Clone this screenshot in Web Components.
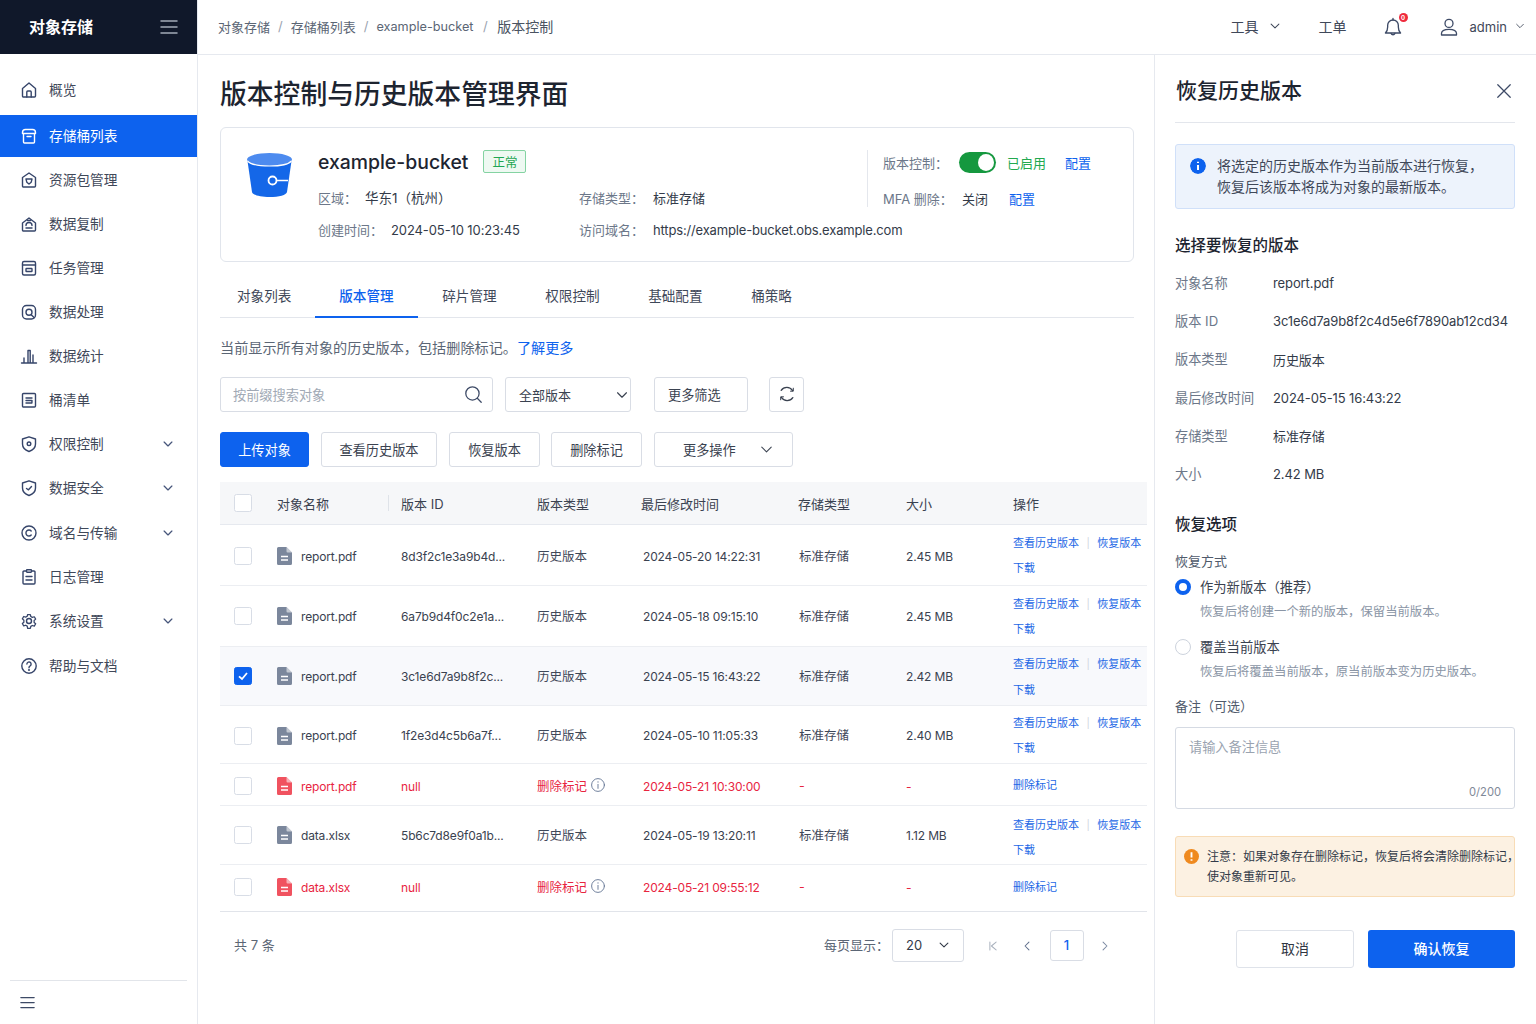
<!DOCTYPE html>
<html lang="zh-CN">
<head>
<meta charset="utf-8">
<title>对象存储</title>
<style>
html,body{margin:0;height:100%;overflow:hidden;background:#fff}
body{font-family:Inter,"Noto Sans CJK SC",sans-serif;font-size:14px;color:#333b49}
</style>
</head>
<body>
<x-app>
  <x-sidebar slot="side">
    <x-nav icon="home">概览</x-nav>
    <x-nav icon="bucket" active>存储桶列表</x-nav>
    <x-nav icon="pack">资源包管理</x-nav>
    <x-nav icon="copy">数据复制</x-nav>
    <x-nav icon="task">任务管理</x-nav>
    <x-nav icon="proc">数据处理</x-nav>
    <x-nav icon="bars">数据统计</x-nav>
    <x-nav icon="list">桶清单</x-nav>
    <x-nav icon="shield" more>权限控制</x-nav>
    <x-nav icon="shieldok" more>数据安全</x-nav>
    <x-nav icon="domain" more style="margin-top:1px">域名与传输</x-nav>
    <x-nav icon="log">日志管理</x-nav>
    <x-nav icon="gear" more>系统设置</x-nav>
    <x-nav icon="help" style="margin-top:1px">帮助与文档</x-nav>
  </x-sidebar>
  <x-topbar slot="top"></x-topbar>
  <x-main slot="main">
    <x-bucket-card></x-bucket-card>
    <x-tabs></x-tabs>
    <x-toolbar></x-toolbar>
    <x-table>
      <x-row h="61" pt="2" lp="0" file="report.pdf" vid="8d3f2c1e3a9b4d..." time="2024-05-20 14:22:31" size="2.45 MB"></x-row>
      <x-row h="61" lp="2" file="report.pdf" vid="6a7b9d4f0c2e1a..." time="2024-05-18 09:15:10" size="2.45 MB"></x-row>
      <x-row h="59" lp="3" file="report.pdf" vid="3c1e6d7a9b8f2c..." time="2024-05-15 16:43:22" size="2.42 MB" checked></x-row>
      <x-row h="58" pt="2" lp="1" file="report.pdf" vid="1f2e3d4c5b6a7f..." time="2024-05-10 11:05:33" size="2.40 MB"></x-row>
      <x-row h="42" pt="3" file="report.pdf" time="2024-05-21 10:30:00" del></x-row>
      <x-row h="59" lp="6" file="data.xlsx" vid="5b6c7d8e9f0a1b..." time="2024-05-19 13:20:11" size="1.12 MB"></x-row>
      <x-row h="47" pb="2" lp="2" file="data.xlsx" time="2024-05-21 09:55:12" del></x-row>
    </x-table>
    <x-pager></x-pager>
  </x-main>
  <x-drawer slot="drawer"></x-drawer>
</x-app>
<script>
const I={
home:'<path d="M2.5 7.5 9 2l6.500 5.500V15a1 1 0 0 1-1 1h-11a1 1 0 0 1-1-1z"/><path d="M6.800 16v-5a1 1 0 0 1 1-1h2.400a1 1 0 0 1 1 1v5"/>',
bucket:'<path d="M2.500 5.500c0-1.700 1-3 3-3h7c2 0 3 1.300 3 3v1h-13z"/><path d="M3.500 6.500V15a1 1 0 0 0 1 1h9a1 1 0 0 0 1-1V6.500"/><path d="M7 9.500h4"/>',
pack:'<path d="M2.500 6.500 9 2l6.500 4.500V15a1 1 0 0 1-1 1h-11a1 1 0 0 1-1-1z"/><path d="M6 8h6l-.8 3.200L9 13l-2.200-1.800z"/>',
copy:'<path d="M2.500 8 9 3l6.500 5v7a1 1 0 0 1-1 1h-11a1 1 0 0 1-1-1z"/><path d="M6 10.500a3 3 0 0 1 6 0M6 13h6"/><path d="M7.500 5.500h3"/>',
task:'<rect x="2.500" y="2.500" width="13" height="13.500" rx="1.500"/><path d="M2.500 6h13"/><rect x="6" y="9.500" width="6" height="3" rx=".5"/>',
proc:'<rect x="2.500" y="2.500" width="13" height="13.500" rx="4"/><circle cx="9" cy="9.200" r="3"/><path d="M11.500 12l2.500 2.500"/>',
bars:'<path d="M1.500 16h15M4 16v-5M8 16V3.500h2.200V16M13 16V8"/>',
list:'<rect x="2.500" y="2.500" width="13" height="13.500" rx="1"/><path d="M6 7h6M6 9.500h6l-.1 2.500H6"/>',
shield:'<path d="M9 1.800 15.500 4v5c0 3.800-2.800 6.200-6.500 7.500C5.300 15.200 2.500 12.800 2.500 9V4z"/><circle cx="9" cy="8.800" r="1.800"/>',
shieldok:'<path d="M9 1.800 15.500 4v5c0 3.800-2.800 6.200-6.500 7.500C5.300 15.200 2.500 12.800 2.500 9V4z"/><path d="M6.500 9.500l2 1.300 3-3.300"/>',
domain:'<circle cx="9" cy="9" r="7"/><path d="M11.200 7a3 3 0 1 0 0 4"/>',
log:'<path d="M6.500 3H4a1 1 0 0 0-1 1v11a1 1 0 0 0 1 1h10a1 1 0 0 0 1-1V4a1 1 0 0 0-1-1h-2.500"/><rect x="6.500" y="1.800" width="5" height="2.500" rx=".7"/><path d="M6 8.500h6M6 12h6"/>',
gear:'<circle cx="9" cy="9" r="2.500"/><path d="M7.500 1.800h3l.5 2.200 1.700 1 2.200-.7 1.500 2.600-1.700 1.500v2.200l1.700 1.500-1.500 2.600-2.200-.7-1.700 1-.5 2.200h-3L7 14.700l-1.700-1-2.200.7-1.500-2.600 1.700-1.500V8.100L1.600 6.600l1.500-2.600 2.200.7 1.700-1z" transform="translate(.9 .9) scale(.9)"/>',
help:'<circle cx="9" cy="9" r="7.200"/><path d="M6.900 7a2.100 2.100 0 1 1 3.300 1.800c-.8.500-1.200 1-1.200 1.900"/><circle cx="9" cy="13" r=".4"/>',
down:'<path d="M4 6.500 9 11.500 14 6.500"/>',
close:'<path d="M2 2l14 14M16 2 2 16"/>',
search:'<circle cx="8" cy="8" r="6.300"/><path d="M12.600 12.600 16.300 16.300"/>',
refresh:'<path d="M14.600 5.600A6.800 6.800 0 0 0 3.200 5.400M3.400 12.400a6.800 6.800 0 0 0 11.400.2"/><path d="M15.300 3.200v3h-2.800" stroke-width="1"/><path d="M2.700 14.800v-3h2.800" stroke-width="1"/>',
bell:'<path d="M2.200 14.400c1.300-1.300 2-2.800 2-5.400V7.500a4.800 4.800 0 0 1 9.600 0V9c0 2.600.7 4.100 2 5.400z"/><path d="M7.300 14.800a1.800 1.800 0 0 0 3.400 0M9 2.700V1.300"/>',
user:'<circle cx="9" cy="5.400" r="4"/><path d="M1.500 17v-1.500c0-3 2.500-4.200 7.500-4.200s7.500 1.200 7.500 4.200V17z"/>',
info:'<circle cx="9" cy="9" r="7.200"/><path d="M9 8.300v4.500M9 5.300v.6"/>',
menu:'<path d="M1 3h16M1 9h16M1 15h16"/>',
first:'<path d="M5 4v10M13 4 7 9l6 5"/>',
prev:'<path d="M11.500 4 6.500 9l5 5"/>',
next:'<path d="M6.500 4l5 5-5 5"/>'
};
const BLUE='#0d62ee';
function def(tag,render){
  customElements.define(tag,class extends HTMLElement{
    connectedCallback(){
      if(this.shadowRoot)return;
      this.attachShadow({mode:'open'}).innerHTML=render(this);
    }
  });
}
def('x-icon',e=>{
  const s=e.getAttribute('size')||18,c=e.getAttribute('color')||'currentColor',w=e.getAttribute('w')||1.4;
  return `<style>:host{display:inline-flex;flex:none;width:${s}px;height:${s}px}svg{display:block}</style>
  <svg width="${s}" height="${s}" viewBox="0 0 18 18" fill="none" stroke="${c}" stroke-width="${w}" stroke-linecap="round" stroke-linejoin="round">${I[e.getAttribute('name')]||''}</svg>`;
});
def('x-app',()=>`<style>
:host{display:grid;grid-template-columns:198px 1fr 382px;grid-template-rows:55px 1fr;height:1024px;overflow:hidden}
.s{grid-row:1/3;display:block}.t{grid-column:2/4;display:block}
</style><slot class="s" name="side"></slot><slot class="t" name="top"></slot><slot name="main"></slot><slot name="drawer"></slot>`);
def('x-sidebar',()=>`<style>
:host{display:flex;flex-direction:column;height:1024px;border-right:1px solid #e6e9ef;box-sizing:border-box;background:#fff}
.logo{height:54px;background:#10182a;display:flex;align-items:center;justify-content:space-between;padding:0 19px 0 29px;color:#fff;font-size:16px;font-weight:700}
.logo span{padding-bottom:2px}
nav{flex:1;padding-top:14px;display:block}
.foot{margin:0 10px;border-top:1px solid #e2e5ea;height:43px;display:flex;align-items:center;padding-left:10px;color:#3d4a66}
</style>
<div class="logo"><span>对象存储</span><x-icon name="menu" size="18" color="#a3abb8" w="1.500"></x-icon></div>
<nav><slot></slot></nav>
<div class="foot"><x-icon name="menu" size="15" w="1.500"></x-icon></div>`);
def('x-nav',e=>{
  const a=e.hasAttribute('active');
  return `<style>
:host{display:flex;align-items:center;box-sizing:border-box;height:${a?42:44}px;${a?'margin:3px 0 1px;':''}padding:0 22px ${a?0:1}px 20px;color:${a?'#fff':'#3f4859'};background:${a?BLUE:'transparent'};font-size:13.700px;line-height:20px}
x-icon{margin-right:11px;color:${a?'#fff':'#36456a'}}
span{flex:1}
</style><x-icon name="${e.getAttribute('icon')}" size="18"></x-icon><span><slot></slot></span>${e.hasAttribute('more')?'<x-icon name="down" size="14" w="1.600" style="margin:0;color:#46557a"></x-icon>':''}`;
});
def('x-topbar',()=>`<style>
:host{display:flex;align-items:center;height:55px;box-sizing:border-box;border-bottom:1px solid #e6e9ef;padding:0 10px 2px 20px;background:#fff;color:#3f4859;font-size:13px}
.bc{flex:1;display:flex;align-items:center;color:#5b6675}
.bc i{font-style:normal;margin:0 8px;color:#9aa3b0}
.bc b{font-weight:400;color:#4a5361;}
.r{display:flex;align-items:center;font-size:14px}
.bell{position:relative;display:inline-flex;margin:2px 37px 0 36px}
.dot{position:absolute;top:-4px;right:-5px;width:9px;height:9px;border-radius:50%;background:#ef2b3d;color:#fff;font-size:6px;line-height:9px;text-align:center;font-weight:700}
</style>
<div class="bc"><span>对象存储</span><i>/</i><span>存储桶列表</span><i>/</i><span style="font-size:12.700px">example-bucket</span><i style="margin:0 9.500px">/</i><b style="font-size:14px">版本控制</b></div>
<div class="r"><span>工具</span><x-icon name="down" size="14" w="1.300" style="margin:0 0 0 9px"></x-icon><span style="margin-left:37px">工单</span>
<span class="bell"><x-icon name="bell" size="20" color="#3d4a66" w="1.200"></x-icon><span class="dot">0</span></span>
<x-icon name="user" size="18" color="#3d4a66" w="1.300" style="margin-top:2px"></x-icon><span style="margin-left:12px;font-size:13px;padding-top:2px">admin</span><x-icon name="down" size="12" w="1.300" style="margin-left:7px"></x-icon></div>`);
def('x-main',()=>`<style>
:host{display:block;box-sizing:border-box;padding:20px 20px 0 22px;min-width:0;height:969px;overflow:hidden;background:#fff}
h1{margin:0 0 14px;font-size:26.800px;line-height:39px;font-weight:500;color:#1d2430;height:38px}
</style><h1>版本控制与历史版本管理界面</h1><slot></slot>`);
def('x-bucket-card',()=>`<style>
:host{display:flex;height:135px;box-sizing:border-box;border:1px solid #e1e5ec;border-radius:6px;padding:22px 0 0 26px;background:#fff;font-size:13px;color:#333b49;white-space:nowrap}
svg{flex:none;display:block;margin:3px 26px 0 0}
.d{flex:1;min-width:0}
.n{display:flex;align-items:center;height:23px}
.name{font-size:19.400px;font-weight:500;color:#1d2430}
.tag{margin-left:15px;height:23px;width:43px;box-sizing:border-box;border:1px solid #84d3a2;border-radius:2px;background:#eef9f2;color:#1fa653;font-size:12.500px;display:flex;align-items:center;justify-content:center}
.g{display:grid;grid-template-columns:261px 1fr;margin-top:9px}
.c{height:32px;display:flex;align-items:center;line-height:20px}
.l{color:#6c7789}
.right{width:266px;flex:none;border-left:1px solid #e4e7ed;height:57px;padding-left:15px;box-sizing:border-box;margin:0}
.rr{display:flex;align-items:center;height:24px;color:#6c7789}
.sw{width:37px;height:21px;border-radius:11px;background:#15983f;display:flex;justify-content:flex-end;align-items:center;padding:0 2px;box-sizing:border-box;margin:0 11px 0 0}
.sw i{width:16px;height:17px;border-radius:50%;background:#fff;display:block}
a{color:${BLUE};text-decoration:none}
</style>
<svg width="45" height="44" viewBox="0 0 45 44"><path d="M.5 8 5 39c.5 3 8 5 17.500 5S39.500 42 40 39L44.500 8z" fill="#1467e8"/><ellipse cx="22.500" cy="6.500" rx="22.500" ry="6.500" fill="#4d8bef"/><path d="M.5 8c3 3.500 11 5 22 5s19-1.500 22-5" fill="none" stroke="#fff" stroke-width="1.200"/><circle cx="25.500" cy="27.500" r="4" fill="none" stroke="#fff" stroke-width="1.800"/><path d="M29.500 27.500H41" stroke="#fff" stroke-width="1.500"/></svg>
<div class="d"><div class="n"><span class="name">example-bucket</span><span class="tag">正常</span></div>
<div class="g">
<div class="c"><span class="l" style="width:47px">区域：</span><span style="font-size:13.500px">华东1（杭州）</span></div><div class="c"><span class="l" style="width:74px">存储类型：</span><span>标准存储</span></div>
<div class="c"><span class="l" style="width:73px">创建时间：</span><span style="letter-spacing:-.1px">2024-05-10 10:23:45</span></div><div class="c"><span class="l" style="width:74px">访问域名：</span><span style="letter-spacing:-.16px">https://example-bucket.obs.example.com</span></div>
</div></div>
<div class="right"><div class="rr"><span style="width:76px">版本控制：</span><span class="sw"><i></i></span><span style="color:#22a94f;width:58px">已启用</span><a>配置</a></div>
<div class="rr" style="margin-top:12px"><span style="width:79px">MFA 删除：</span><span style="color:#333b49;width:47px">关闭</span><a>配置</a></div></div>`);
def('x-tabs',()=>`<style>
:host{display:flex;height:43px;box-sizing:border-box;margin-top:13px;border-bottom:1px solid #e3e6ec;color:#3f4859;font-size:13.600px;width:914px}
span{box-sizing:border-box;padding:0 24.300px;height:43px;line-height:42px;display:block}
.on{color:${BLUE};border-bottom:2px solid ${BLUE};font-weight:500}
</style><span style="padding:0 23.600px 0 17px">对象列表</span><span class="on">版本管理</span><span>碎片管理</span><span>权限控制</span><span>基础配置</span><span>桶策略</span>`);
def('x-btn',e=>{
  const p=e.hasAttribute('primary'),l=e.getAttribute('left');
  return `<style>:host{display:inline-flex;align-items:center;justify-content:${l?'flex-start':'center'};${l?`padding-left:${l}px;`:''}padding-bottom:1px;box-sizing:border-box;height:35px;width:${e.getAttribute('w')}px;border:1px solid ${p?BLUE:'#d9dde5'};background:${p?BLUE:'#fff'};color:${p?'#fff':'#3a4250'};border-radius:3px;font-size:13.200px;flex:none}</style><slot></slot>`;
});
def('x-toolbar',()=>`<style>
:host{display:block;font-size:13px;color:#3a4250}
p{margin:20px 0 0;height:20px;line-height:20px;font-size:14.150px;color:#5b6675}
a{color:${BLUE}}
.row{display:flex;align-items:center;margin-top:19px;height:35px}
.box{display:flex;align-items:center;box-sizing:border-box;height:35px;border:1px solid #d9dde5;border-radius:3px;background:#fff}
.ph{flex:1;color:#a1a9b5;font-size:13.200px}
</style>
<p>当前显示所有对象的历史版本，包括删除标记。<a>了解更多</a></p>
<div class="row">
<div class="box" style="width:273px;padding:0 9px 0 12px"><span class="ph">按前缀搜索对象</span><x-icon name="search" size="19" color="#3d4a66" w="1.200"></x-icon></div>
<div class="box" style="width:126px;padding:0 0 0 13px;margin-left:12px"><span style="flex:1">全部版本</span><x-icon name="down" size="16" w="1.300" style="margin-right:0"></x-icon></div>
<x-btn w="94" left="13" style="margin-left:23px">更多筛选</x-btn>
<x-btn w="35" style="margin-left:21px"><x-icon name="refresh" size="18" w="1.300"></x-icon></x-btn>
</div>
<div class="row" style="margin-top:20px">
<x-btn w="89" primary>上传对象</x-btn>
<x-btn w="116" style="margin-left:12px">查看历史版本</x-btn>
<x-btn w="91" style="margin-left:12px">恢复版本</x-btn>
<x-btn w="91" style="margin-left:11px">删除标记</x-btn>
<x-btn w="139" left="28" style="margin-left:12px"><span>更多操作</span><x-icon name="down" size="17" w="1.100" style="margin-left:22px"></x-icon></x-btn>
</div>`);
const COLS='57px 124px 136px 105px 156px 108px 107px 134px';
const CB=(on)=>`<span style="box-sizing:border-box;display:flex;align-items:center;justify-content:center;width:18px;height:18px;border-radius:2.500px;border:1px solid ${on?BLUE:'#d8dde6'};background:${on?BLUE:'#fff'}">${on?'<svg width="12" height="12" viewBox="0 0 12 12" fill="none" stroke="#fff" stroke-width="1.800"><path d="M2 6.300 5 9l5-6"/></svg>':''}</span>`;
def('x-table',()=>`<style>
:host{display:block;width:927px;margin-top:15px;font-size:13px}
.h{display:grid;grid-template-columns:${COLS};height:43px;align-items:center;background:#f6f7f9;border-bottom:1px solid #e6e9ef;box-sizing:border-box;color:#3a4250}
.h>div{display:flex;align-items:center;height:100%;box-sizing:border-box}
.sep{border-right:1px solid #dfe3e9;height:16px;margin-left:auto;margin-right:12px}
</style>
<div class="h"><div style="padding-left:14px">${CB(false)}</div><div>对象名称<span class="sep"></span></div><div>版本 ID</div><div>版本类型</div><div style="margin-left:-1px">最后修改时间</div><div>存储类型</div><div>大小</div><div>操作</div></div><slot></slot>`);
def('x-row',e=>{
  const d=e.hasAttribute('del'),c=e.hasAttribute('checked'),col=d?'#e8253f':'#3a4250';
  const doc=d?'#f0525f':'#7b879c';
  const a=e.getAttribute.bind(e);
  return `<style>
:host{display:grid;grid-template-columns:${COLS};height:${a('h')}px;box-sizing:border-box;padding:${a('pt')||0}px 0 ${a('pb')||0}px;border-bottom:1px solid ${a('h')=='47'?'#e1e4ea':'#eceef2'};align-items:center;color:${col};background:${c?'#f8f9fc':'#fff'};font-size:12.500px}
.n{display:flex;align-items:center}
.lat{font-size:12px;letter-spacing:-.15px}
.cj{padding-bottom:2px}
svg{display:block;flex:none}
.lk{color:#1d68e6;font-size:11px;line-height:25.500px;padding-top:${a('lp')||0}px}
.lk i{font-style:normal;color:#cfd5de;margin:0 7.500px;font-size:10px}
</style>
<div style="padding-left:14px">${CB(c)}</div>
<div class="n lat"><svg width="15" height="18" viewBox="0 0 15 18" style="margin-right:9px"><path d="M1.500 0H9.500L15 5.500V16.500A1.500 1.500 0 0 1 13.500 18H1.500A1.500 1.500 0 0 1 0 16.500V1.500A1.500 1.500 0 0 1 1.500 0Z" fill="${doc}"/><path d="M9.500 0 15 5.500H10.500A1 1 0 0 1 9.500 4.500Z" fill="#fff" opacity=".55"/><path d="M4 9.500h7M4 13h7" stroke="#fff" stroke-width="1.300"/></svg>${a('file')}</div>
<div class="lat">${d?'null':a('vid')}</div>
<div class="n cj" style="color:${d?col:'#3f4859'}">${d?'删除标记':'历史版本'}${d?'<x-icon name="info" size="16" color="#5f7190" w="1" style="margin-left:3px"></x-icon>':''}</div>
<div class="lat" style="padding-left:1px">${a('time')}</div>
<div class="cj" style="color:${d?col:'#3f4859'};padding-left:1px">${d?'-':'标准存储'}</div>
<div class="lat">${d?'-':a('size')}</div>
<div class="lk">${d?'删除标记':'查看历史版本<i>|</i>恢复版本<br>下载'}</div>`;
});
def('x-pager',()=>`<style>
:host{display:flex;align-items:center;width:927px;height:33px;margin-top:17px;box-sizing:border-box;padding:0 35px 0 14px;font-size:13px;color:#5b6675}
.tx{padding-bottom:2px}
.sp{flex:1}
.sel{display:flex;align-items:center;box-sizing:border-box;width:72px;height:33px;border:1px solid #d9dde5;border-radius:3px;margin:0 22px 0 3px;padding:0 12px 2px 13px;color:#333b49;font-size:13px;background:#fff}
.sel span{flex:1}
.one{box-sizing:border-box;width:34px;height:31px;border:1px solid #d9dde5;border-radius:3px;color:${BLUE};display:flex;align-items:center;justify-content:center;margin:0 14.500px 0 15.500px;padding-bottom:2px;font-weight:500}
</style><span class="tx">共 7 条</span><span class="sp"></span><span class="tx">每页显示：</span>
<div class="sel"><span>20</span><x-icon name="down" size="14" w="1.400"></x-icon></div>
<x-icon name="first" size="14" color="#a9b1bd" w="1.300"></x-icon><x-icon name="prev" size="14" color="#5f6f8c" w="1.300" style="margin-left:20px"></x-icon>
<div class="one">1</div><x-icon name="next" size="14" color="#7c8aa3" w="1.300"></x-icon>`);
def('x-kv',e=>`<style>:host{display:flex;align-items:center;height:38.200px;font-size:13.200px}
span{width:98px;color:#6c7789;flex:none;padding-bottom:1px}b{font-weight:400;color:#333b49;font-size:13px;letter-spacing:-.1px;white-space:nowrap}</style><span>${e.getAttribute('k')}</span><b><slot></slot></b>`);
def('x-drawer',()=>`<style>
:host{display:block;box-sizing:border-box;height:969px;border-left:1px solid #e6e9ef;padding:0 21px 0 20px;overflow:hidden;background:#fff;color:#3a4250}
.hd{display:flex;align-items:center;justify-content:space-between;box-sizing:border-box;height:68px;padding:21px 3px 16px 1px;border-bottom:1px solid #e3e6ec}
.hd h2{margin:0;font-size:21px;line-height:30px;font-weight:500;color:#1d2430}
.info{display:flex;box-sizing:border-box;height:65px;margin-top:21px;background:#edf3fc;border:1px solid #d0e0f9;border-radius:3px;padding:10px 14px 0;font-size:14px;line-height:21px;color:#3f4859}
.ic{width:16px;height:16px;border-radius:50%;flex:none;margin:3px 11px 0 0;display:block}
h3{margin:0;font-size:15.500px;line-height:24px;font-weight:500;color:#1d2430}
.lb{font-size:13px;line-height:20px;color:#4f5a6b}
.rd{display:flex;align-items:center;font-size:13.300px;line-height:20px;color:#3a4250}
.rd i{box-sizing:border-box;width:16px;height:16px;border-radius:50%;margin-right:9px;display:block;border:1px solid #cdd3dd;background:#fff}
.rd i.on{border:4.500px solid ${BLUE}}
.hint{font-size:12.350px;line-height:18px;margin:6px 0 0 25px;color:#8a95a5}
.ta{box-sizing:border-box;height:82px;margin-top:11px;border:1px solid #d5dae3;border-radius:3px;padding:9px 13px 7px;display:flex;flex-direction:column;justify-content:space-between;font-size:13.200px;line-height:20px;color:#9aa3b0}
.ta div{text-align:right;font-size:11.200px;line-height:18px;color:#7f8998}
.warn{display:flex;box-sizing:border-box;height:61px;margin-top:27px;background:#fcf1e2;border:1px solid #f8dcb6;border-radius:3px;padding:10px 0 0 8px;font-size:12px;line-height:20px;color:#333b49;white-space:nowrap}
.warn svg{flex:none;margin:2px 8px 0 0;display:block}
.btns{display:flex;justify-content:flex-end;gap:14px;margin-top:33px}
.btns span{box-sizing:border-box;height:38px;display:flex;align-items:center;justify-content:center;border-radius:3px;font-size:14px;padding-bottom:3px}
</style>
<div class="hd"><h2>恢复历史版本</h2><x-icon name="close" size="16" color="#3d4a66" w="1.400"></x-icon></div>
<div class="info"><svg class="ic" viewBox="0 0 16 16"><circle cx="8" cy="8" r="8" fill="${BLUE}"/><path d="M8 7v5M8 3.700v1.300" stroke="#fff" stroke-width="2"/></svg><div>将选定的历史版本作为当前版本进行恢复，<br>恢复后该版本将成为对象的最新版本。</div></div>
<h3 style="margin-top:25px">选择要恢复的版本</h3>
<div style="margin-top:6px">
<x-kv k="对象名称">report.pdf</x-kv><x-kv k="版本 ID">3c1e6d7a9b8f2c4d5e6f7890ab12cd34</x-kv><x-kv k="版本类型">历史版本</x-kv><x-kv k="最后修改时间">2024-05-15 16:43:22</x-kv><x-kv k="存储类型">标准存储</x-kv><x-kv k="大小">2.42 MB</x-kv>
</div>
<h3 style="margin-top:20px">恢复选项</h3>
<div class="lb" style="margin-top:14px">恢复方式</div>
<div class="rd" style="margin-top:6px"><i class="on"></i>作为新版本（推荐）</div>
<div class="hint">恢复后将创建一个新的版本，保留当前版本。</div>
<div class="rd" style="margin-top:16px"><i></i>覆盖当前版本</div>
<div class="hint">恢复后将覆盖当前版本，原当前版本变为历史版本。</div>
<div class="lb" style="margin-top:15px">备注（可选）</div>
<div class="ta"><span>请输入备注信息</span><div>0/200</div></div>
<div class="warn"><svg width="15" height="15" viewBox="0 0 16 16"><circle cx="8" cy="8" r="8" fill="#ef8a1f"/><path d="M8 3.500v5.500M8 11v1.600" stroke="#fff" stroke-width="2"/></svg><div>注意：如果对象存在删除标记，恢复后将会清除删除标记，<br>使对象重新可见。</div></div>
<div class="btns"><span style="width:118px;border:1px solid #dfe3ea;color:#2f3642">取消</span><span style="width:147px;background:${BLUE};color:#fff;font-weight:500">确认恢复</span></div>`);
</script>
</body>
</html>
